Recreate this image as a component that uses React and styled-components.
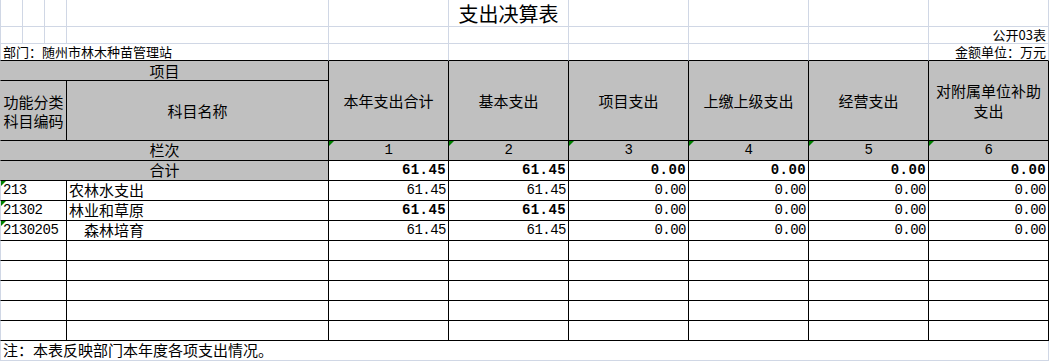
import React from "react";
import styled, { createGlobalStyle, css } from "styled-components";

const GRID = "#d0d7e5";
const INK = "#000";
const FILL = "#c0c0c0";
const MARK = "#008000";

const heads = ["本年支出合计", "基本支出", "项目支出", "上缴上级支出", "经营支出", "对附属单位补助支出"];

const total = ["61.45", "61.45", "0.00", "0.00", "0.00", "0.00"];

const rows = [
  { code: "213", name: "农林水支出", vals: ["61.45", "61.45", "0.00", "0.00", "0.00", "0.00"], bold: [] },
  { code: "21302", name: "林业和草原", vals: ["61.45", "61.45", "0.00", "0.00", "0.00", "0.00"], bold: [0, 1] },
  { code: "2130205", name: "森林培育", indent: true, vals: ["61.45", "61.45", "0.00", "0.00", "0.00", "0.00"], bold: [] },
];

const Global = createGlobalStyle`
  html, body { margin: 0; padding: 0; background: #fff; }
  body { font-family: "Noto Sans CJK SC", sans-serif; color: #000; }
`;

const Sheet = styled.div`
  display: grid;
  grid-template-columns: 23px 22px 22px 262px repeat(6, 120px);
  grid-template-rows: 27px 17px 17px 20px 60px repeat(10, 20px) 20px;
  width: 1049px;
  height: 361px;
  overflow: hidden;
`;

const edge = (v) => (v === "ink" ? INK : v === "grid" ? GRID : "transparent");

const Cell = styled.div`
  position: relative;
  box-sizing: border-box;
  min-width: 0;
  grid-column: span ${(p) => p.$span || 1};
  grid-row: span ${(p) => p.$rows || 1};
  display: flex;
  align-items: ${(p) => (p.$v === "center" ? "center" : "flex-end")};
  justify-content: ${(p) =>
    p.$align === "right" ? "flex-end" : p.$align === "center" ? "center" : "flex-start"};
  text-align: ${(p) => p.$align || "left"};
  padding: 0 2px ${(p) => (p.$v === "center" ? 0 : 1)}px ${(p) => (p.$indent ? 17 : 2)}px;
  border-right: 1px solid ${(p) => edge(p.$r || "ink")};
  border-bottom: 1px solid ${(p) => edge(p.$b || "ink")};
  border-left: ${(p) => (p.$first ? `1px solid ${p.$fill ? FILL : GRID}` : "none")};
  background: ${(p) => (p.$fill ? FILL : "#fff")};
  font-family: ${(p) =>
    p.$mono ? `"Liberation Mono", monospace` : `"Noto Sans CJK SC", sans-serif`};
  font-size: ${(p) => p.$size || 15}px;
  font-weight: ${(p) => (p.$bold ? 700 : 400)};
  letter-spacing: ${(p) => (p.$mono ? (p.$bold ? "0.4px" : "-0.5px") : "0")};
  line-height: ${(p) => p.$lh || 18}px;
  white-space: ${(p) => (p.$wrap ? "normal" : "nowrap")};
  overflow: visible;

  ${(p) =>
    p.$mark &&
    css`
      &::before {
        content: "";
        position: absolute;
        left: 0;
        top: 0;
        width: 0;
        height: 0;
        border-top: 5px solid ${MARK};
        border-right: 5px solid transparent;
      }
    `}
`;

const Num = (props) => <Cell $mono $size={14} $align="right" {...props} />;

const App = () => {
  const cols = Array.from({ length: 10 });
  const empties = Array.from({ length: 5 });

  return (
    <>
      <Global />
      <Sheet>
        {/* title row */}
        {cols.map((_, i) => (
          <Cell key={"t" + i} $first={i === 0} $r="grid" $b="grid" $align="center" $size={20} $lh={22}>
            {i === 5 ? "支出决算表" : ""}
          </Cell>
        ))}

        {cols.map((_, i) => (
          <Cell key={"s" + i} $first={i === 0} $r="grid" $b="grid" $align="right" $size={13} $lh={15}>
            {i === 9 ? "公开03表" : ""}
          </Cell>
        ))}

        <Cell $first $span={4} $r="grid" $size={13} $lh={15}>
          部门：随州市林木种苗管理站
        </Cell>
        {cols.slice(4).map((_, i) => (
          <Cell key={"u" + i} $r="grid" $align="right" $size={13} $lh={15}>
            {i === 5 ? "金额单位：万元" : ""}
          </Cell>
        ))}

        {/* header */}
        <Cell $first $fill $span={4} $align="center" $v="center">项目</Cell>
        {heads.map((h) => (
          <Cell key={h} $fill $rows={2} $align="center" $v="center" $wrap $lh={20}>
            {h}
          </Cell>
        ))}
        <Cell $first $fill $span={3} $align="center" $v="center" $wrap $lh={19}>
          功能分类科目编码
        </Cell>
        <Cell $fill $align="center" $v="center">科目名称</Cell>

        <Cell $first $fill $span={4} $align="center">栏次</Cell>
        {heads.map((h, i) => (
          <Cell key={"n" + h} $fill $mark $mono $size={14} $align="center">
            {i + 1}
          </Cell>
        ))}

        <Cell $first $fill $span={4} $align="center">合计</Cell>
        {total.map((v, i) => (
          <Num key={"sum" + i} $bold>{v}</Num>
        ))}

        {rows.map((r) => (
          <React.Fragment key={r.code}>
            <Cell $first $span={3} $mark $mono $size={14}>{r.code}</Cell>
            <Cell $indent={r.indent}>{r.name}</Cell>
            {r.vals.map((v, i) => (
              <Num key={r.code + i} $bold={r.bold.includes(i)}>{v}</Num>
            ))}
          </React.Fragment>
        ))}

        {empties.map((_, k) => (
          <React.Fragment key={"e" + k}>
            <Cell $first $span={3} />
            <Cell />
            {heads.map((h) => (
              <Cell key={"e" + k + h} />
            ))}
          </React.Fragment>
        ))}

        <Cell $first $span={10} $r="grid" $b="grid">
          注：本表反映部门本年度各项支出情况。
        </Cell>
      </Sheet>
    </>
  );
};

export default App;
